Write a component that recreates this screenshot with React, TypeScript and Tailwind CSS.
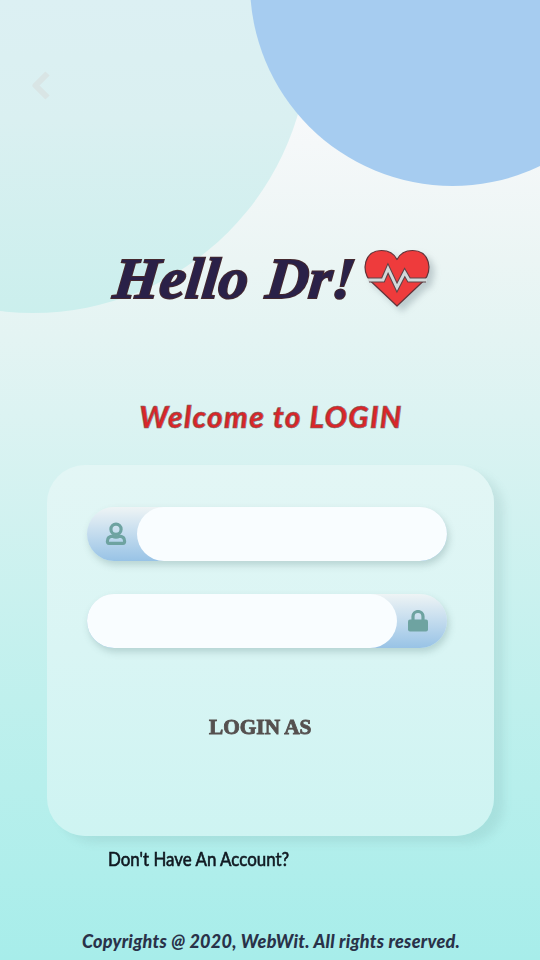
import React from "react";

function HeartPulse() {
  return (
    <svg width="78" height="70" viewBox="0 0 78 70" className="shrink-0 drop-shadow-[5px_5px_3px_rgba(80,100,110,0.28)]">
      <path
        d="M37 60 L10 34.500 C1 25 4 4.500 21.500 4.500 C29 4.500 34.500 8.500 37 13.500 C39.500 8.500 45 4.500 52.500 4.500 C70 4.500 73 25 64 34.500 Z"
        fill="#ee3b3c"
        stroke="#623238"
        strokeWidth="1.200"
        strokeLinejoin="round"
      />
      <path d="M9 34H23L28 22.500L37 41.500L44.700 26.500L49 34H66" fill="none" stroke="#5f4448" strokeWidth="5" />
      <path d="M8 34H23L28 22.500L37 41.500L44.700 26.500L49 34H67" fill="none" stroke="#d2d9da" strokeWidth="2.900" />
    </svg>
  );
}

function UserIcon() {
  return (
    <svg width="22" height="24" viewBox="0 0 22 24" fill="none" stroke="#6ea3a1" strokeWidth="3.200">
      <circle cx="11" cy="7.300" r="5.100" />
      <path d="M7.500 14.200C4 14.500 2.400 16.400 2.400 19.300C2.400 20.700 3 21.400 4 21.400H18C19 21.400 19.600 20.700 19.600 19.300C19.600 16.400 18 14.500 14.500 14.200C12.300 15.500 9.700 15.500 7.500 14.200Z" />
    </svg>
  );
}

function LockIcon() {
  return (
    <svg width="20" height="22" viewBox="0 0 20 22">
      <path d="M5 11V6.500a5 5 0 0 1 10 0V11" fill="none" stroke="#6ea3a1" strokeWidth="3.200" />
      <rect y="9.500" width="20" height="12" rx="2" fill="#6ea3a1" />
    </svg>
  );
}

export default function App() {
  return (
    <main className="relative isolate flex h-[960px] w-[540px] flex-col overflow-hidden bg-[linear-gradient(180deg,#fffcff_0%,#f5f8f9_15%,#ebf5f4_27%,#dcf3f2_43%,#bff0ed_73%,#a7edea_100%)]">
      <div className="absolute -left-[243px] -top-[239px] -z-10 size-[552px] rounded-full bg-[linear-gradient(180deg,#dcf0f3_43%,#daf0f1_65%,#cbefed_100%)]" />
      <div className="absolute -top-[219px] left-[250px] -z-10 size-[405px] rounded-full bg-[#a6ccf0]" />

      <header className="h-[246px] pl-[31px] pt-[70px]">
        <button aria-label="Back" className="block">
          <svg width="20" height="31" viewBox="0 0 20 31" fill="none" stroke="#d9e5e5" strokeWidth="6">
            <path d="M16.500 3.500L4.500 15.500L16.500 27.500" strokeLinejoin="round" />
          </svg>
        </button>
      </header>

      <div className="flex h-[70px] items-start pl-[112px]">
        <h1 className="h-[70px] w-[248px] whitespace-nowrap pl-[2px] font-['Liberation_Serif',serif] text-[58px] font-bold italic leading-[66px] text-[#2a2148] [-webkit-text-stroke:2px_#45292f] [paint-order:stroke_fill]">
          <span className="inline-block origin-left scale-x-[1.02] -skew-x-6 [word-spacing:3px]">Hello Dr!</span>
        </h1>
        <HeartPulse />
      </div>

      <h2 className="mt-[81px] h-[38px] whitespace-nowrap pl-[2px] text-center font-['Lato',sans-serif] text-[30px] font-black italic leading-[38px] tracking-[1.25px] text-[#d92629] [-webkit-text-stroke:0.600px_#75696a]">
        Welcome to LOGIN
      </h2>

      <section className="ml-[46.500px] mt-[30px] flex h-[370.500px] w-[447px] flex-col rounded-[38px] bg-[linear-gradient(180deg,#e3f6f5,#d9f5f4_50%,#cef4f2)] pl-[40.500px] pt-[42px] shadow-[10px_7px_9px_rgba(100,150,150,0.15)]">
        <label className="flex h-[54px] w-[360px] overflow-hidden rounded-full bg-linear-to-b from-[#eef4f5] to-[#98c3e6] shadow-[2px_4px_7px_rgba(70,110,110,0.25)]">
          <span className="flex w-[50px] items-center justify-end pr-[10px]"><UserIcon /></span>
          <input aria-label="Username" className="min-w-0 flex-1 rounded-full bg-[#f9fdff] px-6 outline-none" />
        </label>
        <label className="mt-[33px] flex h-[54px] w-[360px] overflow-hidden rounded-full bg-linear-to-b from-[#eef4f5] to-[#98c3e6] shadow-[2px_4px_7px_rgba(70,110,110,0.25)]">
          <input aria-label="Password" type="password" className="min-w-0 flex-1 rounded-full bg-[#f9fdff] px-6 outline-none" />
          <span className="flex w-[50px] items-center pl-[11px]"><LockIcon /></span>
        </label>
        <p className="ml-[122px] mt-[67px] h-6 w-fit origin-left scale-x-[1.065] whitespace-nowrap font-['Liberation_Serif',serif] text-[20px] font-bold leading-6 text-[#55504f] [-webkit-text-stroke:0.800px_#55504f]">LOGIN AS</p>
      </section>

      <p className="ml-[108px] mt-[9.500px] h-7 w-fit origin-left scale-x-[0.89] whitespace-nowrap font-['Lato',sans-serif] text-[19px] leading-7 text-[#101820] [-webkit-text-stroke:0.600px_#101820]">
        Don't Have An Account?
      </p>
      <footer className="mt-[56px] whitespace-nowrap pl-[2px] text-center font-['Lato',sans-serif] text-[18px] font-black italic leading-6 tracking-[0.26px] text-[#293249]">
        Copyrights @ 2020, WebWit. All rights reserved.
      </footer>
    </main>
  );
}
